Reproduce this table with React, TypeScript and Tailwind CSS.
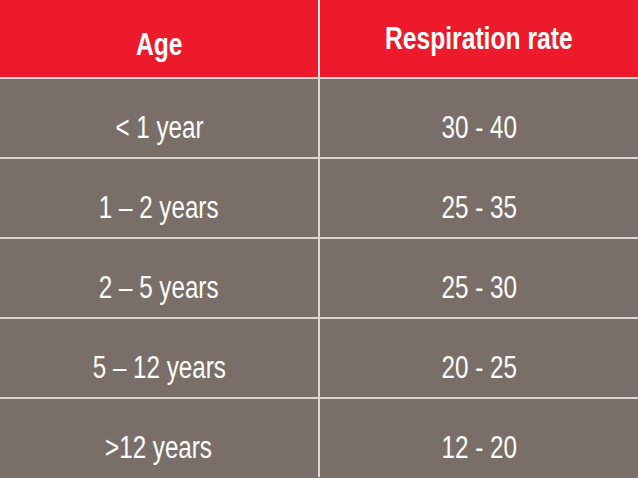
const rows = [
  ["< 1 year", "30 - 40"],
  ["1 – 2 years", "25 - 35"],
  ["2 – 5 years", "25 - 30"],
  ["5 – 12 years", "20 - 25"],
  [">12 years", "12 - 20"],
];

// Liberation Sans squeezed horizontally to read like Arial Narrow
function Narrow({ children, bold }: { children: React.ReactNode; bold?: boolean }) {
  return (
    <span
      className={`inline-block whitespace-nowrap origin-center ${
        bold ? "text-[32px] leading-[32px] font-bold scale-x-[0.77]" : "text-[31px] leading-[31px] scale-x-[0.78]"
      }`}
    >
      {children}
    </span>
  );
}

export default function App() {
  return (
    <div
      className="w-[638px] h-[478px] overflow-hidden bg-[#7a6f68] text-white"
      style={{ fontFamily: '"Liberation Sans", Arial, sans-serif' }}
    >
      {/* header */}
      <div className="grid grid-cols-[318px_2px_318px] h-[77px] bg-[#ec1a2b]">
        <div className="flex justify-center pt-[28px]">
          <Narrow bold>Age</Narrow>
        </div>
        <div className="bg-[#f3e9e7]" />
        <div className="flex justify-center pt-[22px]">
          <Narrow bold>Respiration rate</Narrow>
        </div>
      </div>
      {rows.map(([age, rate]) => (
        <div key={age} className="grid grid-cols-[318px_2px_318px] h-[80px] border-t-2 border-[#ddd6d2]">
          <div className="flex justify-center pt-[33px]">
            <Narrow>{age}</Narrow>
          </div>
          <div className="bg-[#ddd6d2]" />
          <div className="flex justify-center pt-[33px]">
            <Narrow>{rate}</Narrow>
          </div>
        </div>
      ))}
    </div>
  );
}
